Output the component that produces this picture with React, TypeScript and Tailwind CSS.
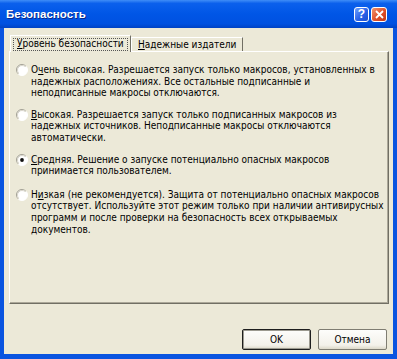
import { Fragment } from "react";

// shared text face: Tahoma is not installed, this is the nearest narrow sans
const uiFont = "font-['DejaVu_Sans_Condensed','Liberation_Sans',sans-serif]";

const levels = [
  {
    key: "very-high",
    mt: "mt-0",
    lines: [
      ["О", "ч", "ень высокая. Разрешается запуск только макросов, установленных в"],
      ["", "", "надежных расположениях. Все остальные подписанные и"],
      ["", "", "неподписанные макросы отключаются."],
    ],
  },
  {
    key: "high",
    mt: "mt-[10px]",
    lines: [
      ["", "В", "ысокая. Разрешается запуск только подписанных макросов из"],
      ["", "", "надежных источников. Неподписанные макросы отключаются"],
      ["", "", "автоматически."],
    ],
  },
  {
    key: "medium",
    mt: "mt-[10px]",
    checked: true,
    lines: [
      ["", "С", "редняя. Решение о запуске потенциально опасных макросов"],
      ["", "", "принимается пользователем."],
    ],
  },
  {
    key: "low",
    mt: "mt-[12px]",
    lines: [
      ["Н", "и", "зкая (не рекомендуется). Защита от потенциально опасных макросов"],
      ["", "", "отсутствует. Используйте этот режим только при наличии антивирусных"],
      ["", "", "программ и после проверки на безопасность всех открываемых"],
      ["", "", "документов."],
    ],
  },
];

function Radio({ checked }: { checked?: boolean }) {
  return (
    <svg width="12" height="12" viewBox="0 0 12 12" className="shrink-0">
      <defs>
        <linearGradient id="radio-outer" x1="0" y1="0" x2="1" y2="1">
          <stop offset="0" stopColor="#8c8a80" />
          <stop offset="0.5" stopColor="#b8b5a8" />
          <stop offset="0.55" stopColor="#ffffff" />
          <stop offset="1" stopColor="#ffffff" />
        </linearGradient>
        <linearGradient id="radio-inner" x1="0" y1="0" x2="1" y2="1">
          <stop offset="0" stopColor="#c9c6ba" />
          <stop offset="0.5" stopColor="#e4e2d8" />
          <stop offset="0.55" stopColor="#ffffff" />
          <stop offset="1" stopColor="#ffffff" />
        </linearGradient>
      </defs>
      <circle cx="6" cy="6" r="5.5" fill="#ffffff" stroke="url(#radio-outer)" />
      <circle cx="6" cy="6" r="4.5" fill="none" stroke="url(#radio-inner)" />
      {checked && <circle cx="6" cy="6" r="1.9" fill="#111111" />}
    </svg>
  );
}

function TitleButtons() {
  return (
    <div className="flex items-center gap-[2px]">
      <div className="flex h-[15px] w-[15px] items-center justify-center rounded-[3px] border border-white bg-[linear-gradient(135deg,#6fa0ff,#2a63e8_55%,#1b4fd0)] text-[12px] leading-none font-bold text-white font-['Liberation_Sans',sans-serif]">
        ?
      </div>
      <div className="flex h-[15px] w-[16px] items-center justify-center rounded-[3px] border border-white bg-[linear-gradient(135deg,#f0946e,#e0502a_55%,#c23a16)]">
        <svg width="9" height="9" viewBox="0 0 9 9">
          <path d="M1 1 L8 8 M8 1 L1 8" stroke="#ffffff" strokeWidth="1.8" />
        </svg>
      </div>
    </div>
  );
}

export default function App() {
  return (
    <div className={`flex h-[359px] w-[397px] flex-col bg-[#0a54e0] ${uiFont} text-[10px] text-black`}>
      {/* title bar */}
      <div className="flex h-[28px] shrink-0 items-center justify-between bg-[linear-gradient(to_bottom,#3f8df7_0%,#0b60ec_12%,#0056e6_50%,#0051e0_85%,#0042c4_100%)] pr-[10px] pl-[6px]">
        <span className="pt-[2px] text-[11.5px] font-bold text-white font-['Liberation_Sans',sans-serif] [text-shadow:1px_1px_0_#0a2a8a]">
          Безопасность
        </span>
        <TitleButtons />
      </div>

      {/* client area */}
      <div className="mx-[4px] mb-[5px] flex flex-1 flex-col bg-[#ece9d8] pt-[7px]">
        {/* tabs */}
        <div className="relative z-10 flex h-[16px] items-end pl-[6px]">
          <div className="-mb-px flex h-[17px] w-[121px] items-center border-t border-r border-l border-t-white border-r-[#716f64] border-l-white bg-[#ece9d8] px-[2px]">
            <div className="flex h-[13px] w-full items-center border border-dotted border-[#555] pl-[3px] leading-none">
              <span className="underline underline-offset-[1px]">У</span>ровень безопасности
            </div>
          </div>
          <div className="flex h-[14px] w-[112px] items-center border-t border-r border-t-white border-r-[#716f64] pl-[7px] leading-none shadow-[inset_1px_0_0_#ffffff]">
            <span className="underline underline-offset-[1px]">Н</span>адежные издатели
          </div>
        </div>

        {/* panel */}
        <div className="mr-[4px] ml-[5px] h-[253px] border border-t-white border-r-[#716f64] border-b-[#716f64] border-l-white pt-[12px] pl-[6px] shadow-[inset_-1px_-1px_0_#aca899]">
          {levels.map((lvl) => (
            <div key={lvl.key} className={`flex items-start gap-[3px] ${lvl.mt}`}>
              <Radio checked={lvl.checked} />
              <div className="leading-[11.6px] whitespace-nowrap">
                {lvl.lines.map(([pre, acc, rest], i) => (
                  <div key={i}>
                    {pre}
                    {acc && <span className="underline underline-offset-[1px]">{acc}</span>}
                    {rest}
                  </div>
                ))}
              </div>
            </div>
          ))}
        </div>

        {/* buttons */}
        <div className="mt-[25px] mr-[6px] flex justify-end gap-[7px]">
          <Fragment>
            <button className="flex h-[21px] w-[69px] items-center justify-center rounded-[2px] border border-[#1e1e1e] bg-[linear-gradient(to_bottom,#fdfdfb,#f3f1ea_80%,#dcd8c8)] shadow-[inset_0_0_0_1px_#9c9a90] text-[10px]">
              OK
            </button>
            <button className="flex h-[21px] w-[69px] items-center justify-center rounded-[2px] border border-[#7f7d72] bg-[linear-gradient(to_bottom,#fdfdfb,#f3f1ea_80%,#dcd8c8)] text-[10px]">
              Отмена
            </button>
          </Fragment>
        </div>
      </div>
    </div>
  );
}
